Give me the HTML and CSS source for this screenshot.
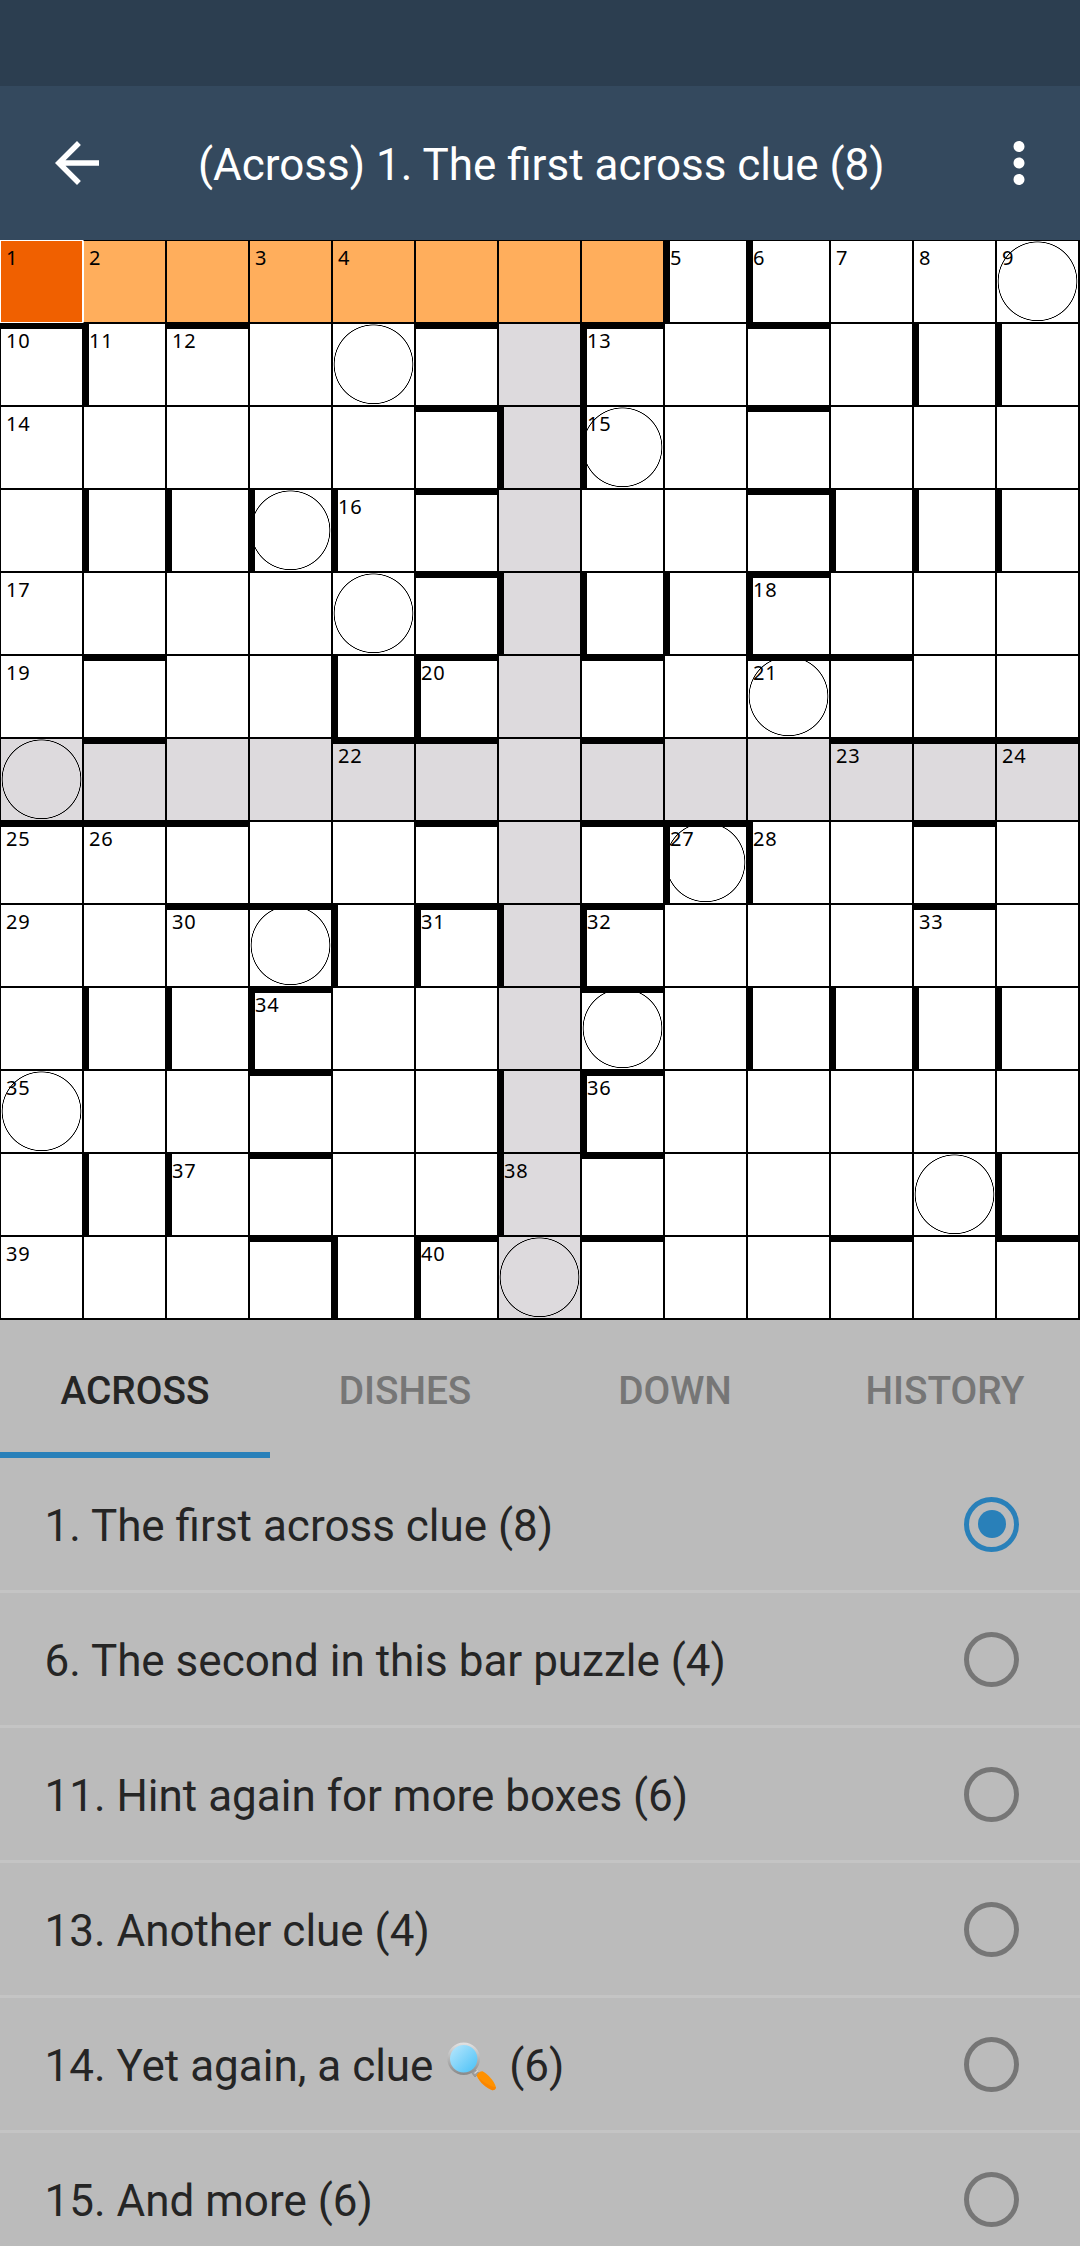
FILE: index.html
```html
<!DOCTYPE html>
<html lang="en">
<head>
<meta charset="utf-8">
<title>Crossword</title>
<link rel="stylesheet" href="styles.css">
</head>
<body>
<div class="status-bar"></div>
<header class="app-bar">
  <svg class="icon" viewBox="0 0 24 24"><path d="M20 11H7.83l5.59-5.59L12 4l-8 8 8 8 1.41-1.41L7.83 13H20v-2z"/></svg>
  <h1 class="title">(Across) 1. The first across clue (8)</h1>
  <svg class="icon" viewBox="0 0 24 24"><path d="M12 8c1.1 0 2-.9 2-2s-.9-2-2-2-2 .9-2 2 .9 2 2 2zm0 2c-1.1 0-2 .9-2 2s.9 2 2 2 2-.9 2-2-.9-2-2-2zm0 6c-1.1 0-2 .9-2 2s.9 2 2 2 2-.9 2-2-.9-2-2-2z"/></svg>
</header>

<main class="board">
  <!-- row 1 -->
  <div class="cell current"><span>1</span></div>
  <div class="cell word"><span>2</span></div>
  <div class="cell word"></div>
  <div class="cell word"><span>3</span></div>
  <div class="cell word"><span>4</span></div>
  <div class="cell word"></div>
  <div class="cell word"></div>
  <div class="cell word"></div>
  <div class="cell left"><span>5</span></div>
  <div class="cell left"><span>6</span></div>
  <div class="cell"><span>7</span></div>
  <div class="cell"><span>8</span></div>
  <div class="cell ring"><span>9</span></div>
  <!-- row 2 -->
  <div class="cell top"><span>10</span></div>
  <div class="cell left"><span>11</span></div>
  <div class="cell top"><span>12</span></div>
  <div class="cell"></div>
  <div class="cell ring"></div>
  <div class="cell top"></div>
  <div class="cell shade"></div>
  <div class="cell top left"><span>13</span></div>
  <div class="cell"></div>
  <div class="cell top"></div>
  <div class="cell"></div>
  <div class="cell left"></div>
  <div class="cell left"></div>
  <!-- row 3 -->
  <div class="cell"><span>14</span></div>
  <div class="cell"></div>
  <div class="cell"></div>
  <div class="cell"></div>
  <div class="cell"></div>
  <div class="cell top"></div>
  <div class="cell shade left"></div>
  <div class="cell ring left"><span>15</span></div>
  <div class="cell"></div>
  <div class="cell top"></div>
  <div class="cell"></div>
  <div class="cell"></div>
  <div class="cell"></div>
  <!-- row 4 -->
  <div class="cell"></div>
  <div class="cell left"></div>
  <div class="cell left"></div>
  <div class="cell ring left"></div>
  <div class="cell left"><span>16</span></div>
  <div class="cell top"></div>
  <div class="cell shade"></div>
  <div class="cell"></div>
  <div class="cell"></div>
  <div class="cell top"></div>
  <div class="cell left"></div>
  <div class="cell left"></div>
  <div class="cell left"></div>
  <!-- row 5 -->
  <div class="cell"><span>17</span></div>
  <div class="cell"></div>
  <div class="cell"></div>
  <div class="cell"></div>
  <div class="cell ring"></div>
  <div class="cell top"></div>
  <div class="cell shade left"></div>
  <div class="cell left"></div>
  <div class="cell left"></div>
  <div class="cell top left"><span>18</span></div>
  <div class="cell"></div>
  <div class="cell"></div>
  <div class="cell"></div>
  <!-- row 6 -->
  <div class="cell"><span>19</span></div>
  <div class="cell top"></div>
  <div class="cell"></div>
  <div class="cell"></div>
  <div class="cell left"></div>
  <div class="cell top left"><span>20</span></div>
  <div class="cell shade"></div>
  <div class="cell top"></div>
  <div class="cell"></div>
  <div class="cell ring top"><span>21</span></div>
  <div class="cell top"></div>
  <div class="cell"></div>
  <div class="cell"></div>
  <!-- row 7 -->
  <div class="cell shade ring"></div>
  <div class="cell shade top"></div>
  <div class="cell shade"></div>
  <div class="cell shade"></div>
  <div class="cell shade top"><span>22</span></div>
  <div class="cell shade top"></div>
  <div class="cell shade"></div>
  <div class="cell shade top"></div>
  <div class="cell shade"></div>
  <div class="cell shade"></div>
  <div class="cell shade top"><span>23</span></div>
  <div class="cell shade top"></div>
  <div class="cell shade top"><span>24</span></div>
  <!-- row 8 -->
  <div class="cell top"><span>25</span></div>
  <div class="cell top"><span>26</span></div>
  <div class="cell top"></div>
  <div class="cell"></div>
  <div class="cell"></div>
  <div class="cell top"></div>
  <div class="cell shade"></div>
  <div class="cell top"></div>
  <div class="cell ring top left"><span>27</span></div>
  <div class="cell left"><span>28</span></div>
  <div class="cell"></div>
  <div class="cell top"></div>
  <div class="cell"></div>
  <!-- row 9 -->
  <div class="cell"><span>29</span></div>
  <div class="cell"></div>
  <div class="cell top"><span>30</span></div>
  <div class="cell ring top"></div>
  <div class="cell left"></div>
  <div class="cell top left"><span>31</span></div>
  <div class="cell shade left"></div>
  <div class="cell top left"><span>32</span></div>
  <div class="cell"></div>
  <div class="cell"></div>
  <div class="cell"></div>
  <div class="cell top"><span>33</span></div>
  <div class="cell"></div>
  <!-- row 10 -->
  <div class="cell"></div>
  <div class="cell left"></div>
  <div class="cell left"></div>
  <div class="cell top left"><span>34</span></div>
  <div class="cell"></div>
  <div class="cell"></div>
  <div class="cell shade"></div>
  <div class="cell ring top"></div>
  <div class="cell"></div>
  <div class="cell left"></div>
  <div class="cell left"></div>
  <div class="cell left"></div>
  <div class="cell left"></div>
  <!-- row 11 -->
  <div class="cell ring"><span>35</span></div>
  <div class="cell"></div>
  <div class="cell"></div>
  <div class="cell top"></div>
  <div class="cell"></div>
  <div class="cell"></div>
  <div class="cell shade left"></div>
  <div class="cell top left"><span>36</span></div>
  <div class="cell"></div>
  <div class="cell"></div>
  <div class="cell"></div>
  <div class="cell"></div>
  <div class="cell"></div>
  <!-- row 12 -->
  <div class="cell"></div>
  <div class="cell left"></div>
  <div class="cell left"><span>37</span></div>
  <div class="cell top"></div>
  <div class="cell"></div>
  <div class="cell"></div>
  <div class="cell shade left"><span>38</span></div>
  <div class="cell top"></div>
  <div class="cell"></div>
  <div class="cell"></div>
  <div class="cell"></div>
  <div class="cell ring"></div>
  <div class="cell left"></div>
  <!-- row 13 -->
  <div class="cell"><span>39</span></div>
  <div class="cell"></div>
  <div class="cell"></div>
  <div class="cell top"></div>
  <div class="cell left"></div>
  <div class="cell top left"><span>40</span></div>
  <div class="cell shade ring"></div>
  <div class="cell top"></div>
  <div class="cell"></div>
  <div class="cell"></div>
  <div class="cell top"></div>
  <div class="cell"></div>
  <div class="cell top"></div>
</main>

<nav class="tabs">
  <div class="tab active">ACROSS</div>
  <div class="tab">DISHES</div>
  <div class="tab">DOWN</div>
  <div class="tab">HISTORY</div>
</nav>

<ul class="clues">
  <li class="clue"><span>1. The first across clue (8)</span><i class="radio checked"></i></li>
  <li class="clue"><span>6. The second in this bar puzzle (4)</span><i class="radio"></i></li>
  <li class="clue"><span>11. Hint again for more boxes (6)</span><i class="radio"></i></li>
  <li class="clue"><span>13. Another clue (4)</span><i class="radio"></i></li>
  <li class="clue"><span>14. Yet again, a clue <svg class="glass" viewBox="0 0 54 54">
    <defs>
      <linearGradient id="lens" x1="0" y1="0" x2="1" y2="1"><stop offset="0.1" stop-color="#b3e5fc"/><stop offset="0.9" stop-color="#4fc3f7"/></linearGradient>
      <linearGradient id="rim" x1="0" y1="0" x2="0" y2="1"><stop offset="0" stop-color="#e0e0e0"/><stop offset="1" stop-color="#8c8c8c"/></linearGradient>
    </defs>
    <path d="M30 28l5 4-4 4-4-5z" fill="#9e9e9e" stroke="#8a8a8a" stroke-width=".6"/>
    <path d="M30.5 32.5L34 29.5" stroke="#d8d8d8" stroke-width="1.2"/>
    <circle cx="19.7" cy="17.7" r="15" fill="url(#lens)" stroke="url(#rim)" stroke-width="2.6"/>
    <path d="M32.6 34.8C33.5 32 36 30.3 38.5 30.3C44 33.5 49.5 39 52 46.2C51.8 48.3 50.5 49.3 48.3 49.2C42 47.3 36 41.8 32.6 34.8Z" fill="#ff9100"/>
    <path d="M34 36.2C37.5 42.5 42.5 46.7 48.3 49.2C50.5 49.3 51.8 48.3 52 46.2C49 46.500 40 42 34 36.200Z" fill="#f57c00" opacity=".55"/>
  </svg> (6)</span><i class="radio"></i></li>
  <li class="clue"><span>15. And more (6)</span><i class="radio"></i></li>
</ul>
</body>
</html>
```
FILE: styles.css
```css
* { box-sizing: border-box; }

body {
  margin: 0;
  width: 1080px;
  height: 2246px;
  overflow: hidden;
  background: #bbb;
  color: #252525;
  font-family: Roboto, sans-serif;
}

.status-bar { height: 86px; background: #2c3e50; }

.app-bar {
  display: flex;
  align-items: center;
  height: 154px;
  padding: 0 28px 0 44px;
  background: #34495e;
  color: #fff;
}

.icon { flex: none; width: 66px; height: 66px; fill: currentColor; }

.icon:last-child { margin-left: auto; }

.title {
  margin: 0 0 0 88px;
  padding-top: 4px;
  font-size: 44px;
  font-weight: 400;
  line-height: 52px;
  white-space: nowrap;
}

/* Bar-style grid: thin lines everywhere, thick bars between words */
.board {
  display: grid;
  grid-template-columns: repeat(13, 83px);
  grid-auto-rows: 83px;
  padding: 0 1px 1px 0;
  background: #000;
}

.cell {
  position: relative;
  border: 1px solid #000;
  background: #fff;
  color: #000;
}

.shade { background: #dddadd; }
.word { background: #ffae5c; }
.current { background: #f06000; border-color: #fff; }
.current + .cell { border-left-color: #fff; }

.ring::after {
  content: "";
  position: absolute;
  inset: 0;
  background: radial-gradient(circle at 40.5px 40.3px, transparent 38.6px, #000 39.2px, #000 39.5px, transparent 40.1px);
}

.cell::before {
  content: "";
  position: absolute;
  z-index: 1;
  inset: -1px;
  border: 0 solid #000;
}

.top::before { border-top-width: 6px; }
.left::before { border-left-width: 6px; }

.cell span {
  position: absolute;
  z-index: 2;
  left: 5px;
  top: 5px;
  font: 20px/24px "Noto Sans", sans-serif;
  letter-spacing: 0.7px;
}

.tabs {
  display: grid;
  grid-template-columns: repeat(4, 1fr);
  height: 138px;
}

.tab {
  height: 138px;
  padding-top: 5px;
  color: #767676;
  font-size: 38.8px;
  font-weight: 500;
  line-height: 132px;
  text-align: center;
}

.tab.active {
  color: #252525;
  background: linear-gradient(#2980b9, #2980b9) bottom / 100% 6px no-repeat;
}

.clues { margin: 0; padding: 0; list-style: none; }

.clue {
  display: flex;
  align-items: center;
  justify-content: space-between;
  height: 135px;
  padding: 0 61px 0 44.5px;
  border-bottom: 3px solid #c4c4c4;
  font-size: 44px;
  line-height: 52px;
  white-space: nowrap;
}

.clue span { padding-top: 4px; }

.radio {
  display: grid;
  place-items: center;
  width: 55px;
  height: 55px;
  border: 5.5px solid #767676;
  border-radius: 50%;
}

.radio.checked { border-color: #2980b9; }

.radio.checked::before {
  content: "";
  width: 28px;
  height: 28px;
  border-radius: 50%;
  background: #2980b9;
}

.glass {
  width: 54px;
  height: 54px;
  margin: -10px 0 -13px;
  vertical-align: -1px;
}
```
